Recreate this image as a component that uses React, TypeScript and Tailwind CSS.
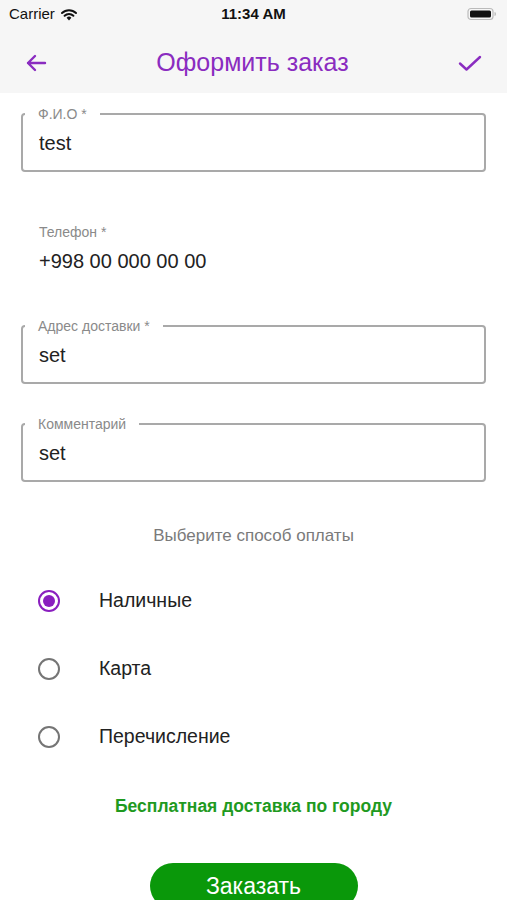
import React, { useState } from 'react';

const purple = 'text-[#8a2cc0]';

const OutlinedField: React.FC<{ label: string; value: string; className?: string }> = ({ label, value, className }) => (
  <fieldset className={`mx-[21px] border-2 border-[#a9a9a9] rounded-[4px] ${className || ''}`}>
    <legend className="ml-[2px] px-[13px] text-[14px] leading-[16px] text-[#8a8a8a]">{label}</legend>
    <div className="pl-[16px] pt-[8px] pb-[14px] text-[20px] leading-[26px] text-[#222]">{value}</div>
  </fieldset>
);

const Radio: React.FC<{ checked: boolean }> = ({ checked }) => (
  <span
    className={`flex items-center justify-center w-[22px] h-[22px] rounded-full border-2 ${
      checked ? 'border-[#8a1fbf]' : 'border-[#757575]'
    }`}
  >
    {checked && <span className="w-[12px] h-[12px] rounded-full bg-[#8a1fbf]" />}
  </span>
);

const App: React.FC = () => {
  const [pay, setPay] = useState('cash');
  const options = [
    { id: 'cash', label: 'Наличные' },
    { id: 'card', label: 'Карта' },
    { id: 'transfer', label: 'Перечисление' },
  ];

  return (
    <div className="w-[507px] h-[900px] overflow-hidden bg-white font-['Liberation_Sans',Arial,sans-serif]">
      {/* Status bar + nav */}
      <div className="bg-[#f6f6f6]">
        <div className="h-[28px] flex items-center justify-between px-[9px] text-[15px] text-[#111]">
          <div className="flex items-center gap-[5px] w-[120px]">
            <span>Carrier</span>
            <svg width="18" height="13" viewBox="0 0 18 13">
              <path d="M9 12.5 L6.6 9.8 A3.4 3.4 0 0 1 11.4 9.8 Z" fill="#111" />
              <path d="M4.6 7.8 A6.3 6.3 0 0 1 13.4 7.8" stroke="#111" strokeWidth="2" fill="none" strokeLinecap="round" />
              <path d="M2 5 A10 10 0 0 1 16 5" stroke="#111" strokeWidth="2" fill="none" strokeLinecap="round" />
            </svg>
          </div>
          <span className="font-bold">11:34 AM</span>
          <div className="w-[120px] flex justify-end pr-[1px]">
            <svg width="30" height="14" viewBox="0 0 30 14">
              <rect x="1" y="1.5" width="25" height="11" rx="3" fill="none" stroke="#bbb" strokeWidth="1.2" />
              <rect x="3" y="3.5" width="21" height="7" rx="1.5" fill="#111" />
              <path d="M27.5 5 Q29 5 29 7 Q29 9 27.5 9 Z" fill="#bbb" />
            </svg>
          </div>
        </div>
        <div className="h-[65px] flex items-center justify-between px-[24px] pt-[4px]">
          <svg width="24" height="24" viewBox="0 0 24 24" className={purple}>
            <path d="M21 12 H4 M11 5 L4 12 L11 19" stroke="currentColor" strokeWidth="2.4" fill="none" strokeLinecap="round" strokeLinejoin="round" />
          </svg>
          <span className={`text-[25px] ${purple}`}>Оформить заказ</span>
          <svg width="26" height="24" viewBox="0 0 26 24" className={purple}>
            <path d="M3 12.5 L9.5 18.5 L23 6" stroke="currentColor" strokeWidth="2.4" fill="none" strokeLinecap="round" strokeLinejoin="round" />
          </svg>
        </div>
      </div>

      {/* Form */}
      <OutlinedField label="Ф.И.О *" value="test" className="mt-[13px]" />

      <div className="mt-[52px] px-[39px]">
        <div className="text-[14px] leading-[16px] text-[#8a8a8a]">Телефон *</div>
        <div className="mt-[8px] text-[20px] leading-[26px] text-[#222]">+998 00 000 00 00</div>
      </div>

      <OutlinedField label="Адрес доставки *" value="set" className="mt-[44px]" />
      <OutlinedField label="Комментарий" value="set" className="mt-[32px]" />

      <div className="mt-[44px] text-center text-[17px] leading-[20px] text-[#7a7a7a]">Выберите способ оплаты</div>

      <div className="mt-[21px]">
        {options.map((o) => (
          <button
            key={o.id}
            onClick={() => setPay(o.id)}
            className="w-full h-[68px] flex items-center pl-[38px]"
          >
            <Radio checked={pay === o.id} />
            <span className="ml-[39px] text-[19.5px] text-[#222]">{o.label}</span>
          </button>
        ))}
      </div>

      <div className="mt-[25px] text-center text-[17.5px] leading-[20px] font-bold text-[#1f9a1f]">
        Бесплатная доставка по городу
      </div>

      <div className="mt-[47px] flex justify-center">
        <button className="w-[208px] h-[46px] rounded-full bg-[#0a980a] text-white text-[23px]">Заказать</button>
      </div>
    </div>
  );
};

export default App;
